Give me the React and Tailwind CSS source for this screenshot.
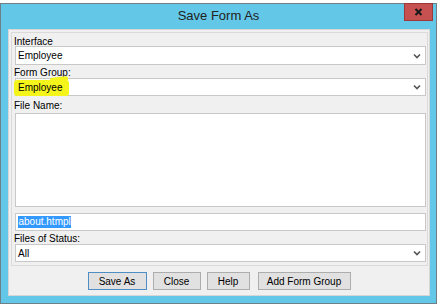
const font = "font-['Liberation_Sans',Arial,sans-serif]"

function Chevron() {
  return (
    <svg width="8" height="6" viewBox="0 0 8 6" className="absolute right-[4px] top-1/2 -translate-y-1/2">
      <path d="M1 1.5 L4 4.5 L7 1.5" fill="none" stroke="#555" strokeWidth="1.6" />
    </svg>
  )
}

function Field({ h, children, select }) {
  return (
    <div className={`relative bg-white border border-[#c8c8c8] ${h} flex items-center pl-[2px] text-[10px] text-black`}>
      {children}
      {select && <Chevron />}
    </div>
  )
}

function Btn({ w, primary, children }) {
  return (
    <div
      className={`${w} h-[18px] flex items-center justify-center text-[10px] text-black bg-[#e1e1e1] border ${
        primary ? 'border-[#4d8fc4]' : 'border-[#adadad]'
      }`}
    >
      {children}
    </div>
  )
}

export default function App() {
  return (
    <div className={`relative w-[438px] h-[306px] bg-white pt-[3px] ${font} overflow-hidden`}>
      <div className="w-[437px] h-[301px] border border-[#6e7f87] bg-[#63c8e8] flex flex-col">
        <div className="h-[25px] flex items-center justify-center text-[13px] text-[#222] pb-[1px]">
          Save Form As
        </div>

        <div className="ml-[7px] w-[422px] h-[267px] bg-[#f0f0f0] border border-[#d6d6d6] flex flex-col">
          <div className="mt-[2px] ml-[2px] w-[417px] h-[234px] border border-[#dadada] pl-[3px] pr-[1px] pb-[3px] flex flex-col">
            <div className="h-[13px] pt-[4px] leading-[10px] text-[10px] -ml-[1px]">Interface</div>
            <Field h="h-[19px]" select>Employee</Field>

            <div className="h-[13px] pt-[3px] leading-[10px] text-[10px] -ml-[1px]">Form Group:</div>
            <Field h="h-[18px]" select>
              <div className="absolute -left-[2px] top-[1px] w-[55px] h-[16px] bg-[#f5f51c] rounded-[3px]" />
              <div className="absolute left-[34px] -top-[2px] w-[18px] h-[5px] bg-[#f5f51c] rounded-[2px] -rotate-6" />
              <span className="relative">Employee</span>
            </Field>

            <div className="h-[17px] pt-[5px] leading-[10px] text-[10px] -ml-[1px]">File Name:</div>
            <div className="h-[94px] bg-white border border-[#c8c8c8]" />

            <div className="mt-[6px]">
              <Field h="h-[18px]">
                <span className="bg-[#3399ff] text-white leading-[12px] px-[0.5px]">about.htmpl</span>
              </Field>
            </div>

            <div className="h-[13px] pt-[3px] leading-[10px] text-[10px] -ml-[1px]">Files of Status:</div>
            <Field h="h-[18px]" select>All</Field>
          </div>

          <div className="mt-[6px] flex justify-center gap-[6px]">
            <Btn w="w-[59px]" primary>Save As</Btn>
            <Btn w="w-[48px]">Close</Btn>
            <Btn w="w-[43px]">Help</Btn>
            <div className="ml-[2px]">
              <Btn w="w-[93px]">Add Form Group</Btn>
            </div>
          </div>
        </div>
      </div>

      <div className="absolute left-[404px] top-[3px] w-[29px] h-[18px] bg-[#c75050] border border-[#9c3a3a] flex items-center justify-center">
        <svg width="9" height="8" viewBox="0 0 9 8">
          <path d="M1.5 1 L7.5 7 M7.5 1 L1.5 7" stroke="#1a1a1a" strokeWidth="2" />
        </svg>
      </div>
    </div>
  )
}
